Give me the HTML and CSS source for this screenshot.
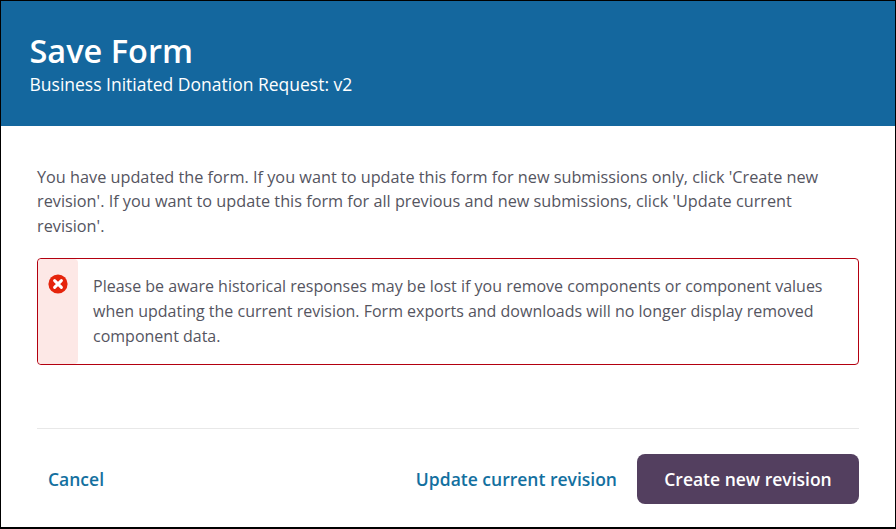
FILE: index.html
```html
<!DOCTYPE html>
<html lang="en">
<head>
<meta charset="utf-8">
<title>Save Form</title>
<link rel="stylesheet" href="styles.css">
</head>
<body>
<div class="modal">
  <header class="modal-header">
    <h1 class="modal-title">Save Form</h1>
    <p class="modal-subtitle">Business Initiated Donation Request: v2</p>
  </header>
  <main class="modal-body">
    <p class="intro">You have updated the form. If you want to update this form for new submissions only, click 'Create new revision'. If you want to update this form for all previous and new submissions, click 'Update current revision'.</p>
    <div class="alert">
      <div class="alert-icon">
        <svg width="20" height="20" viewBox="0 0 20 20" aria-hidden="true"><circle cx="10" cy="10" r="9.6" fill="#e5240c"/><path d="M6.6 6.6l6.8 6.8M13.4 6.6l-6.8 6.8" stroke="#fff" stroke-width="3" stroke-linecap="round" fill="none"/></svg>
      </div>
      <p class="alert-text">Please be aware historical responses may be lost if you remove components or component values when updating the current revision. Form exports and downloads will no longer display removed component data.</p>
    </div>
  </main>
  <footer class="modal-footer">
    <a class="link-btn" href="#">Cancel</a>
    <div class="actions">
      <a class="link-btn" href="#">Update current revision</a>
      <a class="primary-btn" href="#">Create new revision</a>
    </div>
  </footer>
</div>
</body>
</html>
```
FILE: styles.css
```css
* { box-sizing: border-box; }
html, body { margin: 0; height: 100%; background: #fff; }
body { font-family: "Open Sans", "Noto Sans", sans-serif; color: #55555f; }
.modal {
  width: 896px;
  height: 529px;
  border: 1px solid #000;
  border-bottom-width: 2px;
  display: flex;
  flex-direction: column;
  overflow: hidden;
  background: #fff;
}
.modal-header {
  height: 125px;
  background: #14679e;
  color: #fff;
  padding: 31px 28.5px 0;
}
.modal-title { margin: 0; font-size: 32.5px; line-height: 38px; font-weight: 600; }
.modal-subtitle { margin: 1px 0 0; font-size: 17.5px; line-height: 27px; }
.modal-body { flex: 1; padding: 39px 36px 0; }
.intro { margin: 0; font-size: 16.25px; line-height: 24.33px; }
.alert {
  display: flex;
  margin-top: 20px;
  border: 1px solid #b3000f;
  border-radius: 4px;
  height: 107px;
}
.alert-icon {
  flex: none;
  width: 40px;
  background: #fde8e6;
  border-radius: 4px;
  padding: 15px 0 0 10px;
}
.alert-text { margin: 0; padding: 15px 24px 0 15px; font-size: 16px; line-height: 25.2px; }
.modal-footer {
  margin: 0 36px;
  height: 99px;
  border-top: 1px solid #e8e8e8;
  display: flex;
  align-items: flex-start;
  justify-content: space-between;
  padding-top: 25px;
}
.actions { display: flex; align-items: center; gap: 9px; }
.link-btn { color: #13709f; font-size: 17.5px; font-weight: 600; text-decoration: none; padding: 0 11px; line-height: 50px; }
.primary-btn {
  width: 222px;
  height: 50px;
  background: #533f5f;
  color: #fff;
  border-radius: 8px;
  font-size: 17.5px;
  font-weight: 600;
  text-decoration: none;
  display: flex;
  align-items: center;
  justify-content: center;
}
```
